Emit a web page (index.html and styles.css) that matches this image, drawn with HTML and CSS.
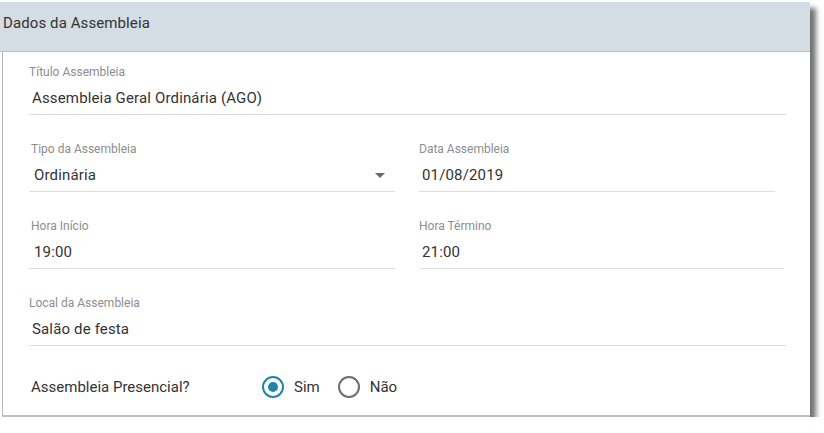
FILE: index.html
```html
<!DOCTYPE html>
<html lang="pt-BR">
<head>
  <meta charset="utf-8">
  <title>Dados da Assembleia</title>
  <link rel="stylesheet" href="styles.css">
</head>
<body>
  <section class="panel">
    <header class="panel-head">Dados da Assembleia</header>
    <div class="panel-body">
      <div class="field">
        <label>Título Assembleia</label>
        <div class="value">Assembleia Geral Ordinária (AGO)</div>
      </div>
      <div class="row">
        <div class="field half">
          <label>Tipo da Assembleia</label>
          <div class="value select">Ordinária <span class="caret"></span></div>
        </div>
        <div class="field half narrow">
          <label>Data Assembleia</label>
          <div class="value">01/08/2019</div>
        </div>
      </div>
      <div class="row">
        <div class="field half">
          <label>Hora Início</label>
          <div class="value">19:00</div>
        </div>
        <div class="field half">
          <label>Hora Término</label>
          <div class="value">21:00</div>
        </div>
      </div>
      <div class="field">
        <label>Local da Assembleia</label>
        <div class="value">Salão de festa</div>
      </div>
      <div class="radios">
        <span class="question">Assembleia Presencial?</span>
        <span class="radio checked"></span><span class="opt">Sim</span>
        <span class="radio"></span><span class="opt">Não</span>
      </div>
    </div>
  </section>
</body>
</html>
```

FILE: styles.css
```css
* {
    box-sizing: border-box;
}

body {
    margin: 0;
    background: white;
    font-family: Roboto, "Liberation Sans", sans-serif;
    color: #333;
}

.panel {
    width: 810px;
    margin-top: 2px;
    background: white;
    box-shadow: 6px 6px 5px rgba(0, 0, 0, 0.55);
}

.panel-head {
    height: 50px;
    padding: 12px 3px 0;
    background-color: #d4dde3;
    border-bottom: 1px solid #bcc2c6;
    font-size: 15px;
    line-height: 18px;
    letter-spacing: 0.1px;
}

.panel-body {
    margin-left: 2px;
    border-left: 1px solid #b5b5b5;
    border-bottom: 2px solid #b8c3cb;
    padding: 13px 24px 17px 26px;
}

.field {
    border-bottom: 1px solid #dedede;
    padding-bottom: 6px;
    margin-bottom: 27px;
}

.field label {
    display: block;
    font-size: 12px;
    line-height: 14px;
    color: #8d8d8d;
}

.field .value {
    margin-top: 9px;
    font-size: 15px;
    line-height: 20px;
    padding-left: 3px;
    letter-spacing: 0.15px;
}

.row {
    display: flex;
    gap: 24px;
}

.half {
    width: 366px;
    padding-left: 2px;
}

.half + .half {
    width: 365px;
    padding-left: 0;
}

.narrow {
    width: 356px !important;
}

.select {
    display: flex;
    justify-content: space-between;
    align-items: center;
}

.caret {
    width: 0;
    height: 0;
    margin-right: 10px;
    border-left: 5px solid transparent;
    border-right: 5px solid transparent;
    border-top: 5px solid #6a6a6a;
}

.radios {
    display: flex;
    align-items: center;
    margin-top: 30px;
    padding-left: 2px;
    font-size: 15px;
    line-height: 20px;
}

.question {
    width: 231px;
}

.radio {
    width: 22px;
    height: 22px;
    border: 2px solid #6e6e6e;
    border-radius: 50%;
    display: flex;
    align-items: center;
    justify-content: center;
}

.radio.checked {
    border-color: #1f86a8;
}

.radio.checked::after {
    content: "";
    width: 10px;
    height: 10px;
    border-radius: 50%;
    background: #1f86a8;
}

.opt {
    margin-left: 10px;
    margin-right: 18px;
}
```
